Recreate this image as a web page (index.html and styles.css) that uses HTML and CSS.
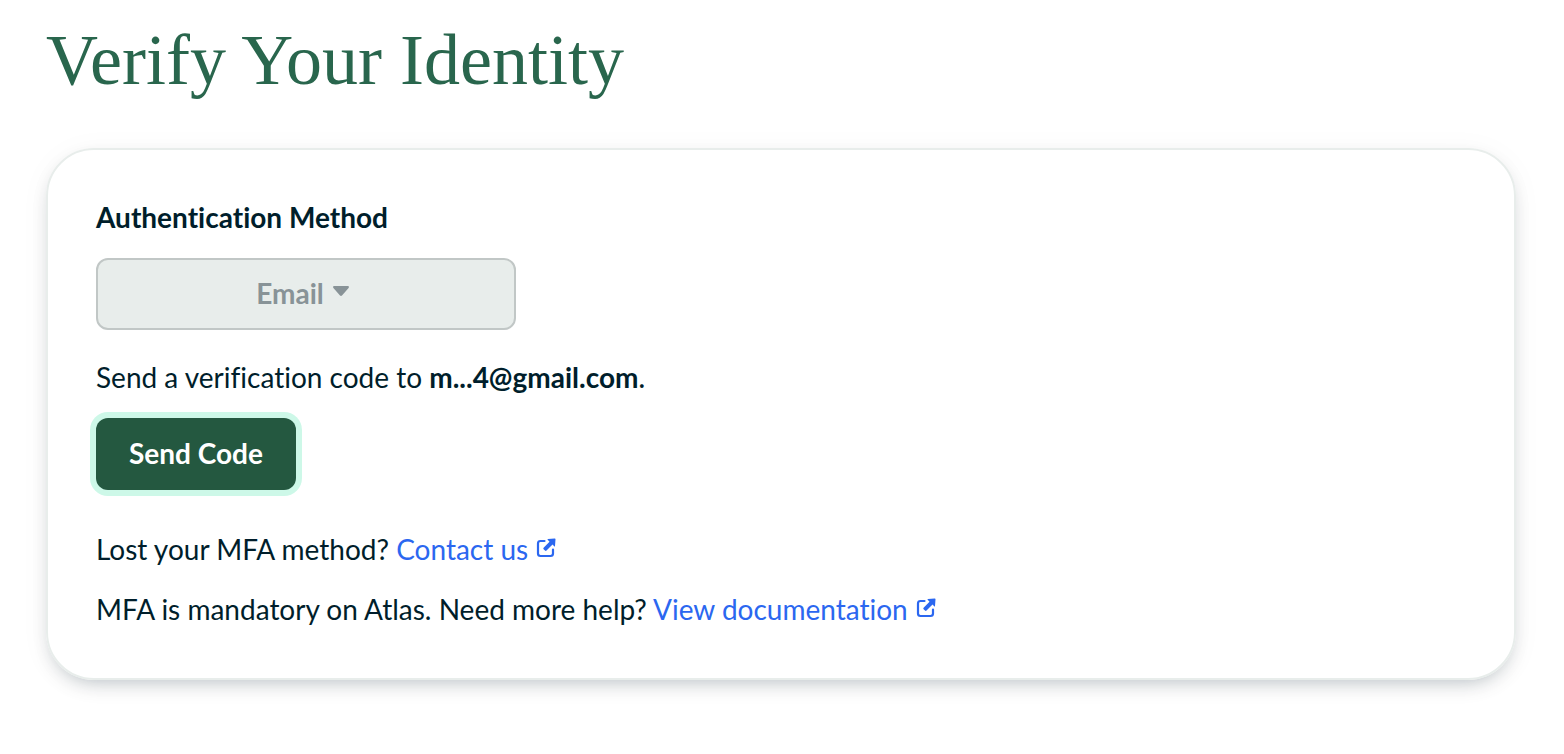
FILE: index.html
```html
<!DOCTYPE html>
<html lang="en">
<head>
<meta charset="utf-8">
<meta name="viewport" content="width=device-width, initial-scale=1">
<title>Verify Your Identity</title>
<link rel="stylesheet" href="styles.css">
</head>
<body>
<main class="page">
  <h1 class="title">Verify Your Identity</h1>
  <section class="card">
    <label class="label" for="method">Authentication Method</label>
    <div class="picker">
      <select class="picker-select" id="method" disabled>
        <option>Email</option>
      </select>
      <svg class="picker-caret" viewBox="0 0 16 10" aria-hidden="true"><path d="M1.2 0h13.6c1 0 1.5 1.1.8 1.9L9 9.5c-.6.6-1.4.6-2 0L.4 1.9C-.3 1.1.2 0 1.200 0z"/></svg>
    </div>
    <p class="text">Send a verification code to <strong>m...4@gmail.com</strong><span class="stop">.</span></p>
    <button class="send" type="button">Send Code</button>
    <p class="text help">Lost your MFA method? <a class="link" href="#contact">Contact us<svg class="external" viewBox="0 0 20 20" aria-hidden="true"><path class="frame" d="M8.500 3H4.500Q2 3 2 5.500V15.500Q2 18 4.500 18H14.500Q17 18 17 15.500V11.500"/><path class="arrow" d="M12 .9 18.600.4q1-.1.900.9L19 8q-.1 1-.8.3L16.500 6.600 10.500 12.600q-.8.700-1.500 0l-1.400-1.400q-.7-.7 0-1.500L13.500 3.700 11.700 1.800q-.7-.8.300-.9z"/></svg></a></p>
    <p class="text more">MFA is mandatory on Atlas. Need more help? <a class="link" href="#docs">View documentation<svg class="external" viewBox="0 0 20 20" aria-hidden="true"><path class="frame" d="M8.500 3H4.500Q2 3 2 5.500V15.500Q2 18 4.500 18H14.500Q17 18 17 15.500V11.500"/><path class="arrow" d="M12 .9 18.600.4q1-.1.900.9L19 8q-.1 1-.8.3L16.500 6.600 10.500 12.600q-.8.700-1.500 0l-1.400-1.400q-.7-.7 0-1.500L13.500 3.700 11.700 1.800q-.7-.8.300-.9z"/></svg></a></p>
  </section>
</main>
</body>
</html>
```

FILE: styles.css
```css
* {
  box-sizing: border-box;
}

body {
  margin: 0;
  background: #fff;
  color: #001e2b;
  font-family: Lato, sans-serif;
  font-size: 28px;
  font-variant-ligatures: none;
  line-height: 40px;
}

.page {
  padding: 20px 48px 72px 46px;
}

.title {
  margin: 0 0 48px;
  color: #29664d;
  font-family: "Liberation Serif", serif;
  font-size: 72px;
  font-weight: 400;
  line-height: 80px;
}

.card {
  display: flex;
  flex-direction: column;
  align-items: flex-start;
  padding: 47px 48px 49px;
  border: 2px solid #e8edeb;
  border-radius: 48px;
  box-shadow: 0 8px 20px -8px rgba(0, 30, 43, 0.3), 0 4px 32px rgba(0, 30, 43, 0.04);
}

.label {
  font-weight: 700;
}

.picker {
  display: grid;
  width: 420px;
  max-width: 100%;
  margin: 21px 0 27px;
}

.picker-select {
  grid-area: 1 / 1;
  width: 100%;
  height: 72px;
  margin: 0;
  padding: 0 32px 2px 0;
  appearance: none;
  border: 2px solid #c1c7c6;
  border-radius: 12px;
  background: #e8edeb;
  color: #889397;
  font: inherit;
  font-weight: 700;
  text-align: center;
  text-align-last: center;
  opacity: 1;
}

.picker-caret {
  grid-area: 1 / 1;
  place-self: center;
  width: 16px;
  height: 10px;
  margin: 0 0 6px 70px;
  fill: #889397;
  pointer-events: none;
}

.text {
  margin: 0;
}

.stop {
  font-weight: 500;
}

.send {
  min-width: 200px;
  height: 72px;
  margin: 21px 0 39px;
  padding: 0 32px 2px;
  border: 0;
  border-radius: 12px;
  background: #245840;
  box-shadow: 0 0 0 6px #cdf8e8;
  color: #fff;
  font: inherit;
  font-weight: 700;
}

.more {
  margin-top: 20px;
}

.link {
  color: #2b67f0;
  text-decoration: none;
}

.external {
  width: 20px;
  height: 20px;
  margin-left: 8px;
  vertical-align: 2px;
  fill: currentColor;
}

.frame {
  fill: none;
  stroke: currentColor;
  stroke-width: 2.2;
  stroke-linecap: round;
}
```
